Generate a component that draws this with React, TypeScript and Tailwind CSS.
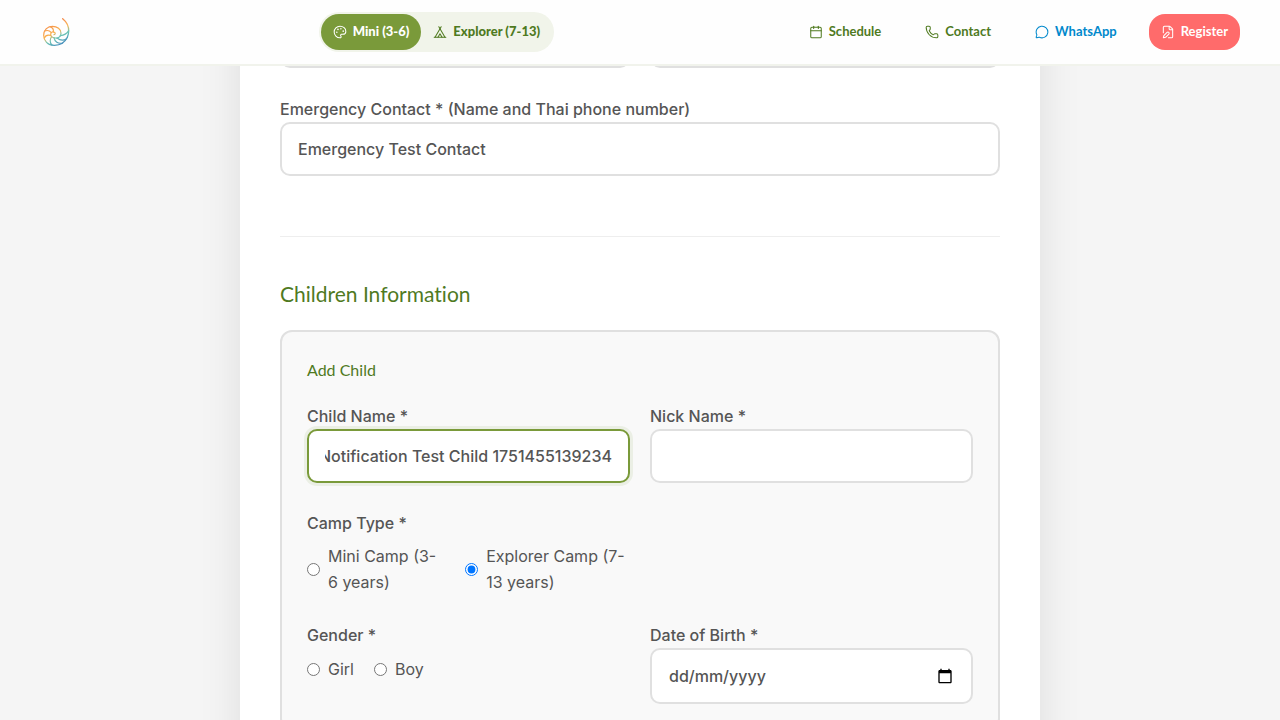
import { useLayoutEffect, useRef } from "react";
import type { ReactNode } from "react";
import { Calendar, FilePen, MessageCircle, Palette, Phone, Tent } from "lucide-react";

const inputClass =
  "block h-[54px] w-full rounded-[10px] border-2 border-[#e0e0e0] bg-white px-4 text-base font-medium text-[#555555] outline-none";
const labelClass = "block text-base leading-[26px] font-medium text-[#555555]";

function Logo() {
  return (
    <svg viewBox="30 42 108 108" className="size-9" fill="none" strokeLinecap="round" aria-hidden="true">
      <defs>
        <linearGradient id="shell" x1="60" y1="66" x2="98" y2="134" gradientUnits="userSpaceOnUse">
          <stop offset="0" stopColor="#f58a4b" />
          <stop offset="0.45" stopColor="#f9b04c" />
          <stop offset="0.65" stopColor="#6cc5b4" />
          <stop offset="1" stopColor="#3f86bd" />
        </linearGradient>
        <linearGradient id="tail" x1="98" y1="56" x2="114" y2="112" gradientUnits="userSpaceOnUse">
          <stop offset="0" stopColor="#f58a4b" />
          <stop offset="0.4" stopColor="#f9b95c" />
          <stop offset="0.75" stopColor="#6cc5b4" />
          <stop offset="1" stopColor="#4fa3bd" />
        </linearGradient>
      </defs>
      <path d="M98 56C108 64 117 76 116 94C116 101 114 107 112 112" stroke="url(#tail)" strokeWidth="4" />
      <g stroke="url(#shell)" strokeWidth="3.6">
        <path d="M112 112C105 127 91 136 73 136C53 136 41 122 41 106C41 90 52 79 67 79C82 79 93 88 93 100C93 109 86 115 77 114C68 114 61 109 62 102C63 96 69 94 73 97C77 99 76 104 72 104" />
        <path d="M116 92C110 102 102 106 91 107" />
        <path d="M110 116C101 122 90 121 81 114" />
        <path d="M98 129C84 132 74 125 72 113" />
        <path d="M66 135C59 129 59 117 65 110" />
        <path d="M43 114C46 106 54 104 62 106" />
        <path d="M44 93C52 90 60 93 64 98" />
        <path d="M60 80C68 83 71 90 70 96" />
      </g>
    </svg>
  );
}

function NavLink({ icon, children, tone }: { icon: ReactNode; children: ReactNode; tone: string }) {
  return (
    <a href="#" className={`flex h-9 items-center gap-1.5 px-3 ${tone}`}>
      {icon}
      {children}
    </a>
  );
}

function Header() {
  return (
    <header className="fixed inset-x-0 top-0 z-10 flex h-[66px] items-center justify-between border-b-2 border-[#f1f3ec] bg-[#fefefe] px-10 font-['Lato',sans-serif] text-[13px] font-bold">
      <a href="#" aria-label="Home">
        <Logo />
      </a>
      <div className="flex h-10 items-center rounded-[20px] bg-[#f1f4ea] p-0.5">
        <button type="button" className="flex h-9 items-center gap-1.5 rounded-[18px] bg-[#7a9a3a] px-3 font-black text-white">
          <Palette size={14} strokeWidth={1.75} />
          Mini (3-6)
        </button>
        <button type="button" className="flex h-9 items-center gap-1.5 rounded-[18px] px-3 font-black text-[#4f7a1f]">
          <Tent size={14} strokeWidth={1.75} />
          Explorer (7-13)
        </button>
      </div>
      <nav className="flex items-center gap-5">
        <NavLink tone="text-[#4f7a1f]" icon={<Calendar size={14} strokeWidth={1.75} />}>Schedule</NavLink>
        <NavLink tone="text-[#4f7a1f]" icon={<Phone size={14} strokeWidth={1.75} />}>Contact</NavLink>
        <NavLink tone="text-[#0088cc]" icon={<MessageCircle size={14} strokeWidth={1.75} />}>WhatsApp</NavLink>
        <NavLink tone="rounded-2xl bg-[#ff6b6b] text-white" icon={<FilePen size={14} strokeWidth={1.75} />}>Register</NavLink>
      </nav>
    </header>
  );
}

function Radio({ name, label, checked }: { name: string; label: string; checked?: boolean }) {
  return (
    <label className="flex items-center gap-2 text-base leading-[26px] text-[#555555]">
      <input type="radio" name={name} defaultChecked={checked} className="size-[13px] shrink-0" />
      <span>{label}</span>
    </label>
  );
}

export default function App() {
  const childName = useRef<HTMLInputElement>(null);

  useLayoutEffect(() => {
    const field = childName.current;
    if (field) field.scrollLeft = field.scrollWidth;
  }, []);

  return (
    <div className="flow-root min-h-screen bg-[#f5f5f5] font-['Inter',sans-serif]">
      <Header />
      <main className="mx-auto -mt-10 max-w-[800px] bg-white px-10 pt-[54px] pb-10 shadow-[0_0_40px_rgba(0,0,0,0.1)]">
        <form>
          <div className="grid grid-cols-2 gap-5">
            <input type="email" aria-label="Email" className={inputClass} />
            <input type="tel" aria-label="Phone" className={inputClass} />
          </div>
          <div className="mt-7">
            <label htmlFor="emergency" className={labelClass}>Emergency Contact * (Name and Thai phone number)</label>
            <input id="emergency" type="text" defaultValue="Emergency Test Contact" className={inputClass} />
          </div>
          <section className="mt-[60px] border-t border-[#eeeeee] pt-10">
            <h2 className="font-['Lato',sans-serif] text-[21px] leading-[33px] text-[#4f7a1f] [font-variant-ligatures:none]">Children Information</h2>
            <div className="mt-5 rounded-xl border-2 border-[#e0e0e0] bg-[#f9f9f9] p-[25px]">
              <h3 className="mb-5 font-['Lato',sans-serif] text-base leading-[26px] text-[#4f7a1f]">Add Child</h3>
              <div className="grid grid-cols-2 gap-x-5 gap-y-[27px]">
                <div>
                  <label htmlFor="child-name" className={labelClass}>Child Name *</label>
                  <input
                    id="child-name"
                    ref={childName}
                    type="text"
                    defaultValue="Notification Test Child 1751455139234"
                    className="block h-[54px] w-full rounded-[10px] border-2 border-[#7a9a3a] bg-white px-4 text-base font-medium text-[#555555] shadow-[0_0_0_3px_rgba(122,154,58,0.1)] outline-none"
                  />
                </div>
                <div>
                  <label htmlFor="nick-name" className={labelClass}>Nick Name *</label>
                  <input id="nick-name" type="text" className={inputClass} />
                </div>
                <fieldset>
                  <legend className={labelClass}>Camp Type *</legend>
                  <div className="mt-[7px] flex gap-5">
                    <Radio name="camp" label="Mini Camp (3-6 years)" />
                    <Radio name="camp" label="Explorer Camp (7-13 years)" checked />
                  </div>
                </fieldset>
                <fieldset className="col-start-1">
                  <legend className={labelClass}>Gender *</legend>
                  <div className="mt-2 flex gap-5">
                    <Radio name="gender" label="Girl" />
                    <Radio name="gender" label="Boy" />
                  </div>
                </fieldset>
                <div>
                  <label htmlFor="birth" className={labelClass}>Date of Birth *</label>
                  <div className="flex h-14 items-center rounded-[10px] border-2 border-[#e0e0e0] bg-white pr-[18px] pl-[17px]">
                    <input
                      id="birth"
                      type="text"
                      inputMode="numeric"
                      placeholder="dd/mm/yyyy"
                      className="min-w-0 flex-1 bg-transparent text-base font-medium text-[#555555] outline-none placeholder:text-[#555555]"
                    />
                    <button type="button" aria-label="Choose date" className="text-black">
                      <svg viewBox="0 0 24 24" className="size-4" fill="currentColor" aria-hidden="true">
                        <path d="M20 3h-1V1h-2v2H7V1H5v2H4c-1.1 0-2 .9-2 2v16c0 1.1.9 2 2 2h16c1.1 0 2-.9 2-2V5c0-1.1-.9-2-2-2zm0 18H4V8h16v13z" />
                      </svg>
                    </button>
                  </div>
                </div>
              </div>
            </div>
          </section>
        </form>
      </main>
    </div>
  );
}
